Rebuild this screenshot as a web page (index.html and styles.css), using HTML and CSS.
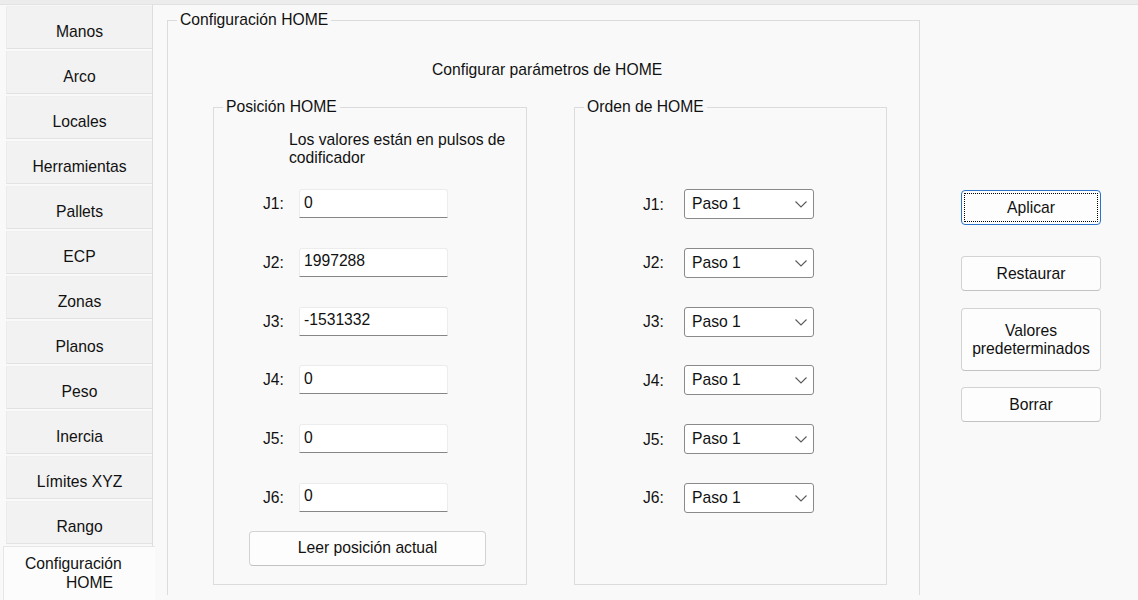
FILE: index.html
```html
<!DOCTYPE html>
<html lang="es">
<head>
<meta charset="utf-8">
<title>Configuración HOME</title>
<link rel="stylesheet" href="styles.css">
</head>
<body>
<div class="topbar"></div>
<div class="main">
  <nav class="tabs">
    <div class="tab">Manos</div>
    <div class="tab">Arco</div>
    <div class="tab">Locales</div>
    <div class="tab">Herramientas</div>
    <div class="tab">Pallets</div>
    <div class="tab">ECP</div>
    <div class="tab">Zonas</div>
    <div class="tab">Planos</div>
    <div class="tab">Peso</div>
    <div class="tab">Inercia</div>
    <div class="tab">Límites XYZ</div>
    <div class="tab">Rango</div>
    <div class="tab active"><span class="l1">Configuración</span><span class="l2">HOME</span></div>
  </nav>
  <section class="panel">
    <fieldset class="group main-group">
      <legend>Configuración HOME</legend>
      <div class="heading">Configurar parámetros de HOME</div>
      <div class="inner-row">
        <fieldset class="group pos-group">
          <legend>Posición HOME</legend>
          <div class="note">Los valores están en pulsos de<br>codificador</div>
          <div class="rows pos-rows">
            <div class="row"><span class="lbl">J1:</span><input class="txt" value="0" readonly></div>
            <div class="row"><span class="lbl">J2:</span><input class="txt" value="1997288" readonly></div>
            <div class="row"><span class="lbl">J3:</span><input class="txt" value="-1531332" readonly></div>
            <div class="row"><span class="lbl">J4:</span><input class="txt" value="0" readonly></div>
            <div class="row"><span class="lbl">J5:</span><input class="txt" value="0" readonly></div>
            <div class="row"><span class="lbl">J6:</span><input class="txt" value="0" readonly></div>
          </div>
          <button class="btn read-btn">Leer posición actual</button>
        </fieldset>
        <fieldset class="group order-group">
          <legend>Orden de HOME</legend>
          <div class="rows order-rows">
            <div class="row"><span class="lbl olbl">J1:</span><div class="combo"><span>Paso 1</span><svg width="12" height="7" viewBox="0 0 12 7"><path d="M0.5 0.5 L6 6 L11.5 0.5" fill="none" stroke="#5a5a5a" stroke-width="1.1"/></svg></div></div>
            <div class="row"><span class="lbl olbl">J2:</span><div class="combo"><span>Paso 1</span><svg width="12" height="7" viewBox="0 0 12 7"><path d="M0.5 0.5 L6 6 L11.5 0.5" fill="none" stroke="#5a5a5a" stroke-width="1.1"/></svg></div></div>
            <div class="row"><span class="lbl olbl">J3:</span><div class="combo"><span>Paso 1</span><svg width="12" height="7" viewBox="0 0 12 7"><path d="M0.5 0.5 L6 6 L11.5 0.5" fill="none" stroke="#5a5a5a" stroke-width="1.1"/></svg></div></div>
            <div class="row"><span class="lbl olbl">J4:</span><div class="combo"><span>Paso 1</span><svg width="12" height="7" viewBox="0 0 12 7"><path d="M0.5 0.5 L6 6 L11.5 0.5" fill="none" stroke="#5a5a5a" stroke-width="1.1"/></svg></div></div>
            <div class="row"><span class="lbl olbl">J5:</span><div class="combo"><span>Paso 1</span><svg width="12" height="7" viewBox="0 0 12 7"><path d="M0.5 0.5 L6 6 L11.5 0.5" fill="none" stroke="#5a5a5a" stroke-width="1.1"/></svg></div></div>
            <div class="row"><span class="lbl olbl">J6:</span><div class="combo"><span>Paso 1</span><svg width="12" height="7" viewBox="0 0 12 7"><path d="M0.5 0.5 L6 6 L11.5 0.5" fill="none" stroke="#5a5a5a" stroke-width="1.1"/></svg></div></div>
          </div>
        </fieldset>
      </div>
    </fieldset>
    <div class="actions">
      <button class="btn act default">Aplicar</button>
      <button class="btn act restore">Restaurar</button>
      <button class="btn act defaults">Valores<br>predeterminados</button>
      <button class="btn act erase">Borrar</button>
    </div>
  </section>
</div>
</body>
</html>
```
FILE: styles.css
```css
* { box-sizing: border-box; }
html, body {
  margin: 0;
  width: 1138px;
  height: 600px;
  overflow: hidden;
}
body {
  background: #f9f9f9;
  font-family: "Liberation Sans", Arial, sans-serif;
  font-size: 15.7px;
  line-height: 18px;
  color: #111;
}
.topbar {
  height: 5px;
  background: #ececec;
  border-bottom: 1px solid #e2e2e2;
}
.main {
  display: flex;
  height: 595px;
  overflow: hidden;
}
.tabs {
  width: 152px;
  flex: none;
  display: flex;
  flex-direction: column;
  padding-top: 1px;
  padding-left: 6px;
  background: #f9f9f9;
}
.tab {
  height: 43px;
  flex: none;
  margin-bottom: 2px;
  background: #f2f2f2;
  border-left: 1px solid #ebebeb;
  border-top: 1px solid #f0f0f0;
  border-bottom: 1px solid #e2e2e2;
  display: flex;
  align-items: center;
  justify-content: center;
  padding-top: 8px;
}
.tab.active {
  margin-left: -3px;
  margin-right: -3px;
  height: 56px;
  background: #fcfcfc;
  border-left: 1px solid #e6e6e6;
  border-top: 1px solid #e6e6e6;
  border-bottom: none;
  position: relative;
  z-index: 1;
  flex-direction: column;
  align-items: flex-start;
  justify-content: flex-start;
  padding: 7px 0 0 21px;
  line-height: 19px;
}
.tab.active .l2 { padding-left: 41px; }
.panel {
  flex: 1;
  border-left: 1px solid #dedede;
  background: #f9f9f9;
  display: flex;
  padding: 6px 0 0 14px;
  overflow: hidden;
}
.group {
  margin: 0;
  padding: 0;
  border: 1px solid #dcdcdc;
  min-width: 0;
}
.group legend {
  margin-left: 9px;
  padding: 0 3px;
  line-height: 18px;
}
.main-group {
  width: 753px;
  height: 584px;
  flex: none;
  border-bottom: none;
}
.heading {
  margin-top: 32px;
  padding-left: 264px;
}
.inner-row {
  display: flex;
  gap: 47px;
  margin: 19px 0 0 45px;
}
.pos-group { width: 314px; height: 487px; }
.order-group { width: 313px; height: 487px; }
.note {
  margin-top: 15px;
  padding-left: 75px;
}
.rows {
  display: flex;
  flex-direction: column;
}
.pos-rows {
  margin-top: 22px;
  padding-left: 49px;
  gap: 29.8px;
}
.order-rows {
  margin-top: 73px;
  padding-left: 68px;
  gap: 28.8px;
}
.row {
  display: flex;
  align-items: center;
}
.pos-rows .row { height: 29px; }
.order-rows .row { height: 30px; }
.lbl { width: 36px; padding-top: 1px; }
.olbl { width: 41px; }
.txt {
  width: 149px;
  height: 29px;
  border: 1px solid #ececec;
  border-bottom: 1px solid #868686;
  border-radius: 3px 3px 0 0;
  background: #fff;
  font: inherit;
  color: #111;
  padding: 0 0 2px 4px;
  outline: none;
}
.combo {
  width: 130px;
  height: 30px;
  border: 1px solid #8a8a8a;
  border-radius: 3px;
  background: #fff;
  display: flex;
  align-items: center;
  justify-content: space-between;
  padding: 0 6px 0 7px;
}
.combo svg { display: block; margin-top: 1px; }
.btn {
  font: inherit;
  line-height: 18px;
  color: #111;
  background: #fdfdfd;
  border: 1px solid #d3d3d3;
  border-bottom-color: #c2c2c2;
  border-radius: 4px;
  padding: 0;
}
.read-btn {
  display: block;
  margin: 19px 0 0 35px;
  width: 237px;
  height: 35px;
}
.actions {
  display: flex;
  flex-direction: column;
  margin-left: 41px;
  padding-top: 179px;
}
.act { width: 140px; height: 35px; flex: none; }
.default {
  border: 1px solid #2a73c8;
  outline: 1px dotted #000;
  outline-offset: -4px;
}
.restore { margin-top: 31px; }
.defaults { margin-top: 17px; height: 63px; }
.erase { margin-top: 16px; }
```
